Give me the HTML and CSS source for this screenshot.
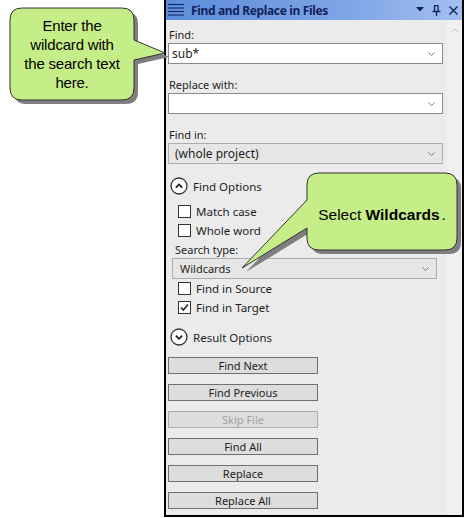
FILE: index.html
```html
<!DOCTYPE html>
<html>
<head>
<meta charset="utf-8">
<link rel="stylesheet" href="styles.css">
</head>
<body>
<div class="panel">
  <div class="titlebar">
    <svg class="menu" width="17" height="14" viewBox="0 0 17 14"><path d="M0 1.5H16M0 5H16M0 8.5H16M0 12H16" stroke="#13235a" stroke-width="1.2"/></svg>
    <span class="title">Find and Replace in Files</span>
    <span class="spacer"></span>
    <svg class="ticon" width="9" height="6" viewBox="0 0 9 6"><path d="M0 0H8L4 4.5Z" fill="#13235a"/></svg>
    <svg class="ticon pin" width="9" height="11" viewBox="0 0 9 11"><path d="M2.5 0.5V6M6 0.5V6M2 0.5H6.5M0.5 6.5H8.5M4.5 6.5V11" stroke="#13235a" stroke-width="1.3" fill="none"/></svg>
    <svg class="ticon close" width="9" height="9" viewBox="0 0 9 9"><path d="M0.5 0.5L8.5 8.5M8.5 0.5L0.5 8.5" stroke="#13235a" stroke-width="1.4"/></svg>
  </div>
  <div class="body">
    <div class="content">
      <div class="label first">Find:</div>
      <div class="input"><span>sub*</span><svg class="chev" width="7" height="4" viewBox="0 0 7 4"><path d="M0.5 0.5L3.5 3.5L6.5 0.5" stroke="#777" fill="none"/></svg></div>
      <div class="label">Replace with:</div>
      <div class="input"><span></span><svg class="chev" width="7" height="4" viewBox="0 0 7 4"><path d="M0.5 0.5L3.5 3.5L6.5 0.5" stroke="#777" fill="none"/></svg></div>
      <div class="label">Find in:</div>
      <div class="input combo"><span>(whole project)</span><svg class="chev" width="7" height="4" viewBox="0 0 7 4"><path d="M0.5 0.5L3.5 3.5L6.5 0.5" stroke="#777" fill="none"/></svg></div>

      <div class="section">
        <svg width="18" height="18" viewBox="0 0 18 18"><circle cx="9" cy="9" r="8" fill="#fff" stroke="#333" stroke-width="1.3"/><path d="M5.8 10.6L9 7.4L12.2 10.6" stroke="#222" stroke-width="1.8" fill="none"/></svg>
        <span>Find Options</span>
      </div>
      <div class="options">
        <div class="check"><span class="box"></span><span>Match case</span></div>
        <div class="check"><span class="box"></span><span>Whole word</span></div>
        <div class="label sub">Search type:</div>
        <div class="input combo wild"><span>Wildcards</span><svg class="chev" width="7" height="4" viewBox="0 0 7 4"><path d="M0.5 0.5L3.5 3.5L6.5 0.5" stroke="#777" fill="none"/></svg></div>
        <div class="check"><span class="box"></span><span>Find in Source</span></div>
        <div class="check"><span class="box"><svg width="11" height="11" viewBox="0 0 11 11"><path d="M2 5.5L4.3 8L9 2.5" stroke="#222" stroke-width="1.5" fill="none"/></svg></span><span>Find in Target</span></div>
      </div>
      <div class="section result">
        <svg width="18" height="18" viewBox="0 0 18 18"><circle cx="9" cy="9" r="8" fill="#fff" stroke="#333" stroke-width="1.3"/><path d="M5.8 7.6L9 10.8L12.2 7.6" stroke="#222" stroke-width="1.8" fill="none"/></svg>
        <span>Result Options</span>
      </div>
      <div class="buttons">
        <div class="btn">Find Next</div>
        <div class="btn">Find Previous</div>
        <div class="btn disabled">Skip File</div>
        <div class="btn">Find All</div>
        <div class="btn">Replace</div>
        <div class="btn">Replace All</div>
      </div>
    </div>
    <div class="scroll">
      <svg width="8" height="5" viewBox="0 0 8 5"><path d="M0.5 4.5L4 1L7.5 4.5" stroke="#c4c4c4" fill="none"/></svg>
    </div>
  </div>
</div>

<svg class="overlay" width="464" height="518" viewBox="0 0 464 518">
  <g transform="translate(4 4)" fill="#7f7f7f">
    <path d="M22 8H122Q134 8 134 20V40L165 53L134 60V88Q134 100 122 100H22Q10 100 10 88V20Q10 8 22 8Z"/>
    <path d="M319 173H445Q457 173 457 185V238Q457 250 445 250H319Q307 250 307 238V228L242 268L307 200V185Q307 173 319 173Z"/>
  </g>
  <g fill="#c6ee88" stroke="#333" stroke-width="1">
    <path d="M22 8H122Q134 8 134 20V40L165 53L134 60V88Q134 100 122 100H22Q10 100 10 88V20Q10 8 22 8Z"/>
    <path d="M319 173H445Q457 173 457 185V238Q457 250 445 250H319Q307 250 307 238V228L242 268L307 200V185Q307 173 319 173Z"/>
  </g>
</svg>
<div class="note n1">Enter the<br>wildcard with<br>the search text<br>here.</div>
<div class="note n2">Select <b>Wildcards</b><span class="dot">.</span></div>
</body>
</html>
```

FILE: styles.css
```css
html, body {
  margin: 0;
  padding: 0;
  background: #fff;
}
body {
  width: 464px;
  height: 518px;
  position: relative;
  overflow: hidden;
  font-family: "Noto Sans", "DejaVu Sans", sans-serif;
  font-size: 11px;
  color: #1e1e1e;
}
.panel {
  margin-left: 164px;
  width: 300px;
  height: 517px;
  box-sizing: border-box;
  border-left: 2px solid #000;
  border-right: 2px solid #000;
  border-bottom: 2px solid #000;
  background: #ebebeb;
  display: flex;
  flex-direction: column;
}
.titlebar {
  height: 20px;
  flex: none;
  display: flex;
  align-items: center;
  padding: 0 4px 0 2px;
  background: linear-gradient(to right, #5c8cda, #7ea4e6 60%, #a2bff0);
  color: #12225a;
}
.menu {
  margin-right: 6px;
}
.title {
  font-weight: bold;
  font-size: 12px;
  letter-spacing: -0.35px;
}
.spacer {
  flex: 1;
}
.ticon {
  margin-left: 9px;
}
.ticon.pin {
  margin-left: 7px;
}
.ticon.close {
  margin-left: 8px;
}
.body {
  flex: 1;
  display: flex;
}
.content {
  width: 281px;
  box-sizing: border-box;
  padding: 0 4px 0 2px;
}
.scroll {
  flex: 1;
  background: #f0f0f0;
  display: flex;
  justify-content: center;
  padding-top: 8px;
  align-items: flex-start;
}
.label {
  height: 15px;
  line-height: 15px;
  margin: 13px 0 1px 1px;
}
.label.first {
  margin-top: 7px;
}
.input {
  height: 21px;
  box-sizing: border-box;
  border: 1px solid #8a8a8a;
  background: #fff;
  display: flex;
  align-items: center;
  justify-content: space-between;
  padding: 0 7px 0 3px;
  font-size: 12px;
}
.input.combo {
  background: #e6e6e6;
  border-color: #acacac;
  padding-left: 6px;
}
.section {
  margin-top: 13px;
  height: 18px;
  display: flex;
  align-items: center;
  padding-left: 2px;
  gap: 5px;
  font-size: 11.5px;
}
.section.result {
  margin-top: 11px;
}
.options {
  margin-top: 7px;
}
.check {
  height: 19px;
  display: flex;
  align-items: center;
  padding-left: 10px;
  gap: 5px;
  font-size: 11.5px;
}
.box {
  width: 13px;
  height: 13px;
  box-sizing: border-box;
  border: 1px solid #333;
  background: #fff;
  display: flex;
  align-items: center;
  justify-content: center;
}
.label.sub {
  margin: 2px 0 1px 7px;
}
.input.wild {
  margin-left: 4px;
  width: 265px;
  padding-left: 7px;
  font-size: 11px;
}
.buttons {
  margin-top: 11px;
  display: flex;
  flex-direction: column;
  gap: 10px;
}
.btn {
  width: 150px;
  height: 17px;
  box-sizing: border-box;
  border: 1px solid #707070;
  background: #dddddd;
  text-align: center;
  line-height: 15px;
  font-size: 11px;
}
.btn.disabled {
  color: #a3a3a3;
  border-color: #adadad;
}
.overlay {
  position: absolute;
  left: 0;
  top: 0;
  pointer-events: none;
}
.note {
  position: absolute;
  font-family: "Liberation Sans", Arial, sans-serif;
  font-size: 15px;
  line-height: 19px;
  color: #000;
  text-align: center;
}
.n1 {
  left: 10px;
  top: 16px;
  width: 124px;
  letter-spacing: -0.2px;
}
.n2 {
  left: 307px;
  top: 205px;
  width: 150px;
  font-size: 15.5px;
}
.dot {
  margin-left: 2px;
}
```
